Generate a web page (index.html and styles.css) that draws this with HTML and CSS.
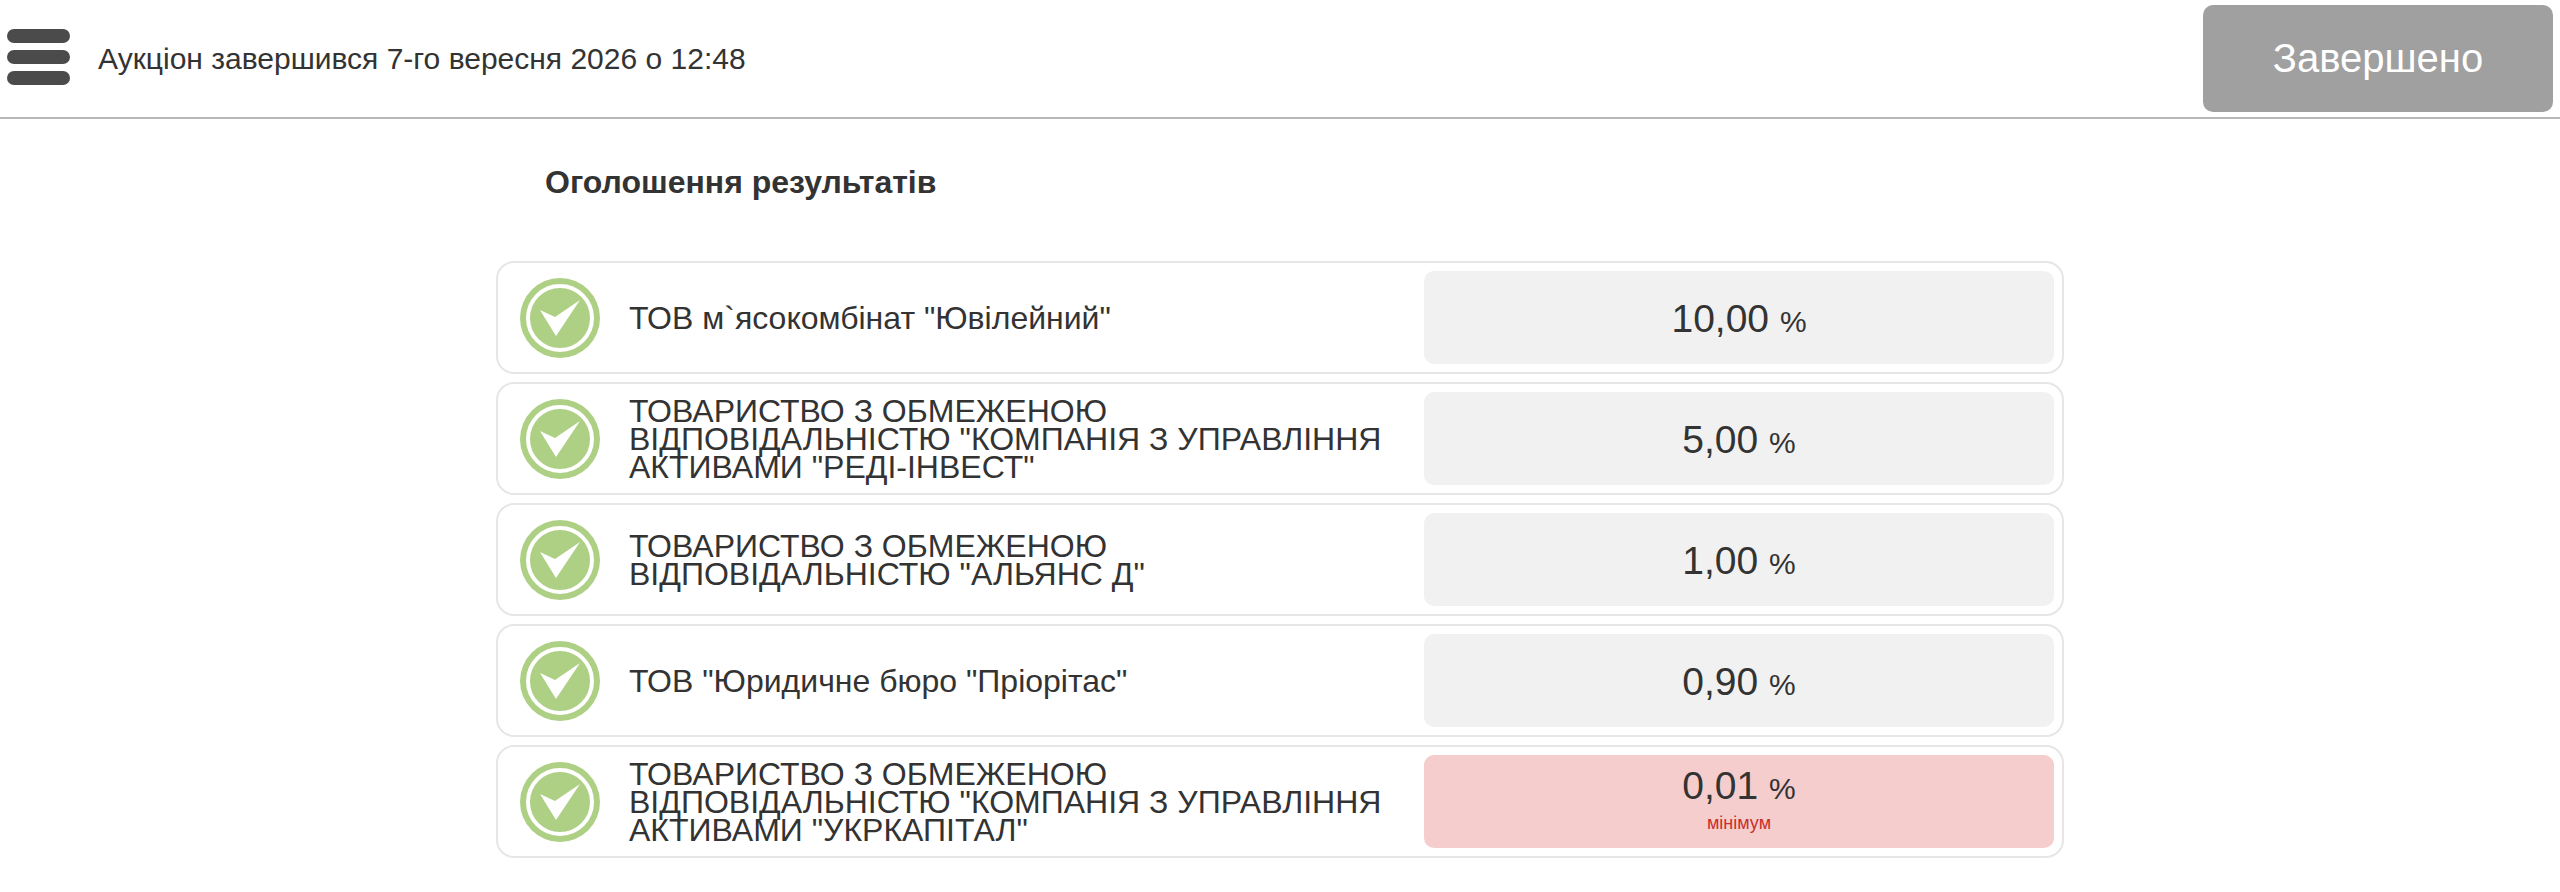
FILE: index.html
```
<!DOCTYPE html>
<html lang="uk">
<head>
  <meta charset="UTF-8">
  <meta name="viewport" content="width=device-width, initial-scale=1.0">
  <title>Оголошення результатів</title>
  <link rel="stylesheet" href="styles.css">
</head>
<body>

  <svg class="sprite" aria-hidden="true">
    <symbol id="check" viewBox="0 0 80 80">
      <circle cx="40" cy="40" r="40" fill="#add084"/>
      <circle cx="40" cy="40" r="32" fill="none" stroke="#fff" stroke-width="4"/>
      <path d="M20 32 L35 39 L60 22 L36 58 Z" fill="#fff"/>
    </symbol>
  </svg>

  <header class="topbar">
    <button class="menu-btn" type="button" aria-label="Меню">
      <span class="bar"></span>
      <span class="bar"></span>
      <span class="bar"></span>
    </button>
    <p class="status">Аукціон завершився 7-го вересня 2026 о 12:48</p>
    <button class="finish-btn" type="button">Завершено</button>
  </header>

  <main class="results">
    <h1 class="title">Оголошення результатів</h1>

    <ul class="bids">
      <li class="bid">
        <svg class="icon"><use href="#check"/></svg>
        <span class="name">ТОВ м`ясокомбінат "Ювілейний"</span>
        <div class="amount">
          <div class="value">10,00 <small>%</small></div>
        </div>
      </li>
      <li class="bid">
        <svg class="icon"><use href="#check"/></svg>
        <span class="name">ТОВАРИСТВО З ОБМЕЖЕНОЮ ВІДПОВІДАЛЬНІСТЮ "КОМПАНІЯ З УПРАВЛІННЯ АКТИВАМИ "РЕДІ-ІНВЕСТ"</span>
        <div class="amount">
          <div class="value">5,00 <small>%</small></div>
        </div>
      </li>
      <li class="bid">
        <svg class="icon"><use href="#check"/></svg>
        <span class="name">ТОВАРИСТВО З ОБМЕЖЕНОЮ ВІДПОВІДАЛЬНІСТЮ "АЛЬЯНС Д"</span>
        <div class="amount">
          <div class="value">1,00 <small>%</small></div>
        </div>
      </li>
      <li class="bid">
        <svg class="icon"><use href="#check"/></svg>
        <span class="name">ТОВ "Юридичне бюро "Пріорітас"</span>
        <div class="amount">
          <div class="value">0,90 <small>%</small></div>
        </div>
      </li>
      <li class="bid">
        <svg class="icon"><use href="#check"/></svg>
        <span class="name">ТОВАРИСТВО З ОБМЕЖЕНОЮ ВІДПОВІДАЛЬНІСТЮ "КОМПАНІЯ З УПРАВЛІННЯ АКТИВАМИ "УКРКАПІТАЛ"</span>
        <div class="amount min">
          <div class="value">0,01 <small>%</small></div>
          <div class="note">мінімум</div>
        </div>
      </li>
    </ul>
  </main>

</body>
</html>
```
FILE: styles.css
```
* {
  box-sizing: border-box;
}
body {
  margin: 0;
  font-family: "Helvetica Neue", "Liberation Sans", Arial, sans-serif;
  font-size: 32px;
  color: #333;
  background: #fff;
}
.sprite {
  display: none;
}
button {
  font-family: inherit;
  border: none;
  cursor: pointer;
}
.topbar {
  display: flex;
  align-items: center;
  padding: 5px 7px;
  border-bottom: 2px solid #b8b8b8;
}
.menu-btn {
  display: flex;
  flex-direction: column;
  gap: 7px;
  width: 63px;
  padding: 0 0 4px;
  background: none;
}
.bar {
  height: 14px;
  border-radius: 7px;
  background: #4b4b4b;
}
.status {
  flex: 1;
  margin: 0 0 0 28px;
  font-size: 30px;
}
.finish-btn {
  width: 350px;
  height: 107px;
  border-radius: 10px;
  font-size: 40px;
  color: #fff;
  background: #a0a0a0;
}
.results {
  max-width: 1568px;
  margin: 0 auto;
}
.title {
  margin: 0;
  padding: 43px 49px;
  font-size: 32px;
  line-height: 40px;
}
.bids {
  display: grid;
  gap: 8px;
  margin: 16px 0 0;
  padding: 0;
  list-style: none;
}
.bid {
  display: flex;
  align-items: center;
  min-height: 113px;
  padding: 8px;
  border: 2px solid #e6e6e6;
  border-radius: 18px;
}
.icon {
  flex: none;
  width: 80px;
  height: 80px;
  margin: 0 29px 0 14px;
}
.name {
  flex: 1;
  padding-right: 20px;
  line-height: 28px;
}
.amount {
  display: flex;
  flex-direction: column;
  justify-content: center;
  width: 630px;
  height: 93px;
  padding-top: 6px;
  border-radius: 10px;
  text-align: center;
  background: #f1f1f1;
}
.amount.min {
  padding: 0 0 4px;
  background: #f6cdcd;
}
.value {
  font-size: 39px;
  line-height: 44px;
}
.value small {
  font-size: 30px;
}
.note {
  font-size: 18px;
  line-height: 24px;
  color: #c9302c;
}
```
